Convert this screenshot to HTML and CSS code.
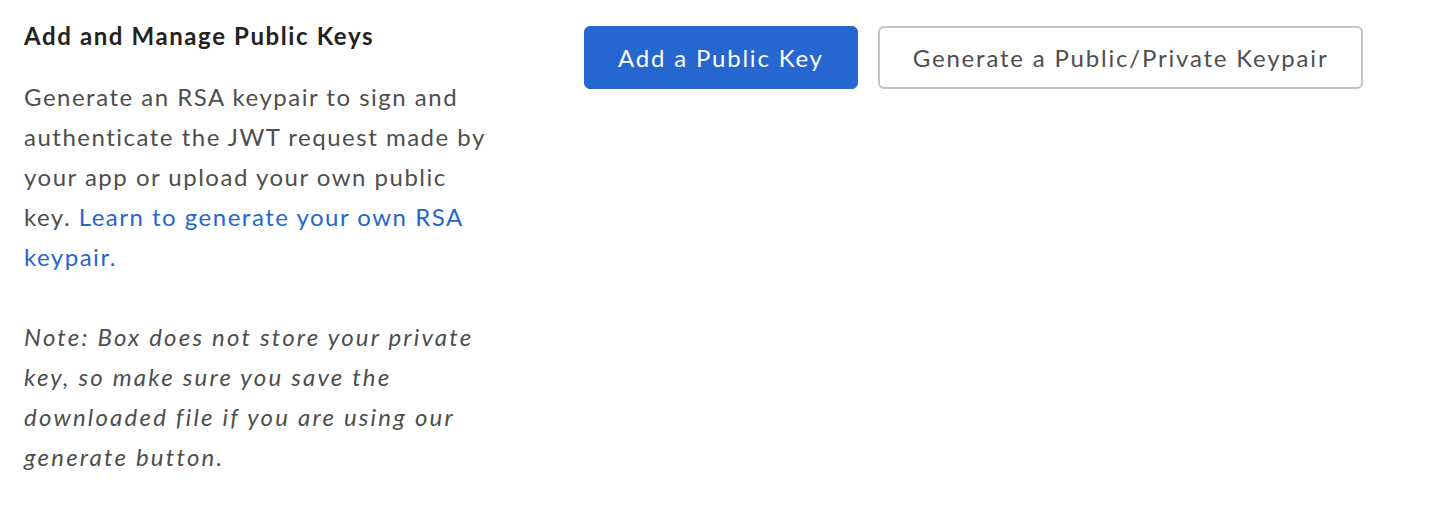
FILE: index.html
```html
<!DOCTYPE html>
<html>
<head>
<meta charset="utf-8">
<link rel="stylesheet" href="styles.css">
</head>
<body>
<div class="section">
  <div class="info">
    <h2 class="title">Add and Manage Public Keys</h2>
    <p class="desc">Generate an RSA keypair to sign and authenticate the JWT request made by your app or upload your own public key. <a class="link" href="#">Learn to generate your own RSA keypair.</a></p>
    <p class="note">Note: Box does not store your private key, so make sure you save the downloaded file if you are using our generate button.</p>
  </div>
  <div class="actions">
    <button class="btn btn-primary">Add a Public Key</button>
    <button class="btn btn-secondary">Generate a Public/Private Keypair</button>
  </div>
</div>
</body>
</html>
```
FILE: styles.css
```css
html, body {
  margin: 0;
  padding: 0;
  background: #ffffff;
}
body {
  font-family: Lato, "Open Sans", sans-serif;
  color: #4e4e4e;
}
.section {
  display: flex;
  padding: 22px 24px;
}
.info {
  width: 470px;
  flex: none;
}
.title {
  margin: 0;
  font-size: 24px;
  line-height: 28px;
  font-weight: 700;
  letter-spacing: 1.6px;
  color: #222222;
}
.desc {
  margin: 27px 0 0 0;
  font-size: 24px;
  line-height: 40px;
  letter-spacing: 1.5px;
}
.link {
  color: #2566cf;
  text-decoration: none;
}
.note {
  margin: 40px 0 0 0;
  font-size: 24px;
  line-height: 40px;
  letter-spacing: 2.2px;
  font-style: italic;
}
.actions {
  display: flex;
  gap: 20px;
  margin-left: 90px;
  margin-top: 4px;
  align-items: flex-start;
}
.btn {
  font-family: Lato, "Open Sans", sans-serif;
  font-size: 24px;
  letter-spacing: 1.8px;
  height: 63px;
  padding: 0 33px 0 33px;
  border-radius: 6px;
  cursor: pointer;
}
.btn-primary {
  background: #2566cf;
  border: 1px solid #2566cf;
  color: #ffffff;
}
.btn-secondary {
  background: #ffffff;
  border: 2px solid #c3c3c3;
  color: #4e4e4e;
}
```
